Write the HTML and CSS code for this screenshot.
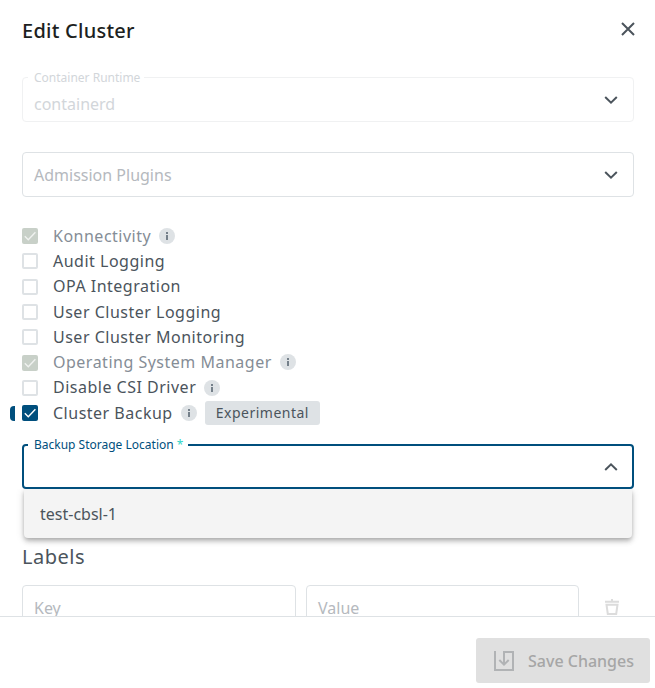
FILE: index.html
```html
<!DOCTYPE html>
<html lang="en">
<head>
<meta charset="utf-8">
<title>Edit Cluster</title>
<link rel="stylesheet" href="styles.css">
</head>
<body>
<div class="dialog">
  <header class="header">
    <h1 class="title">Edit Cluster</h1>
    <svg class="close" width="14" height="14" viewBox="0 0 14 14"><path d="M1 1L13 13M13 1L1 13"/></svg>
  </header>
  <main class="content">
    <div class="field disabled">
      <span class="float-label">Container Runtime</span>
      <span class="value">containerd</span>
      <svg class="chevron" width="14" height="8" viewBox="0 0 14 8"><path d="M1.2 1L7 6.6L12.8 1"/></svg>
    </div>
    <div class="field plugins">
      <span class="placeholder">Admission Plugins</span>
      <svg class="chevron" width="14" height="8" viewBox="0 0 14 8"><path d="M1.2 1L7 6.6L12.8 1"/></svg>
    </div>
    <div class="options">
      <div class="option muted"><span class="box checked"><svg width="16" height="16" viewBox="0 0 16 16"><path d="M2.8 8.2L6.3 11.8L13.4 4.3"/></svg></span><span class="text">Konnectivity</span><span class="info"></span></div>
      <div class="option"><span class="box"></span><span class="text">Audit Logging</span></div>
      <div class="option"><span class="box"></span><span class="text">OPA Integration</span></div>
      <div class="option"><span class="box"></span><span class="text">User Cluster Logging</span></div>
      <div class="option"><span class="box"></span><span class="text">User Cluster Monitoring</span></div>
      <div class="option muted"><span class="box checked"><svg width="16" height="16" viewBox="0 0 16 16"><path d="M2.8 8.2L6.3 11.8L13.4 4.3"/></svg></span><span class="text">Operating System Manager</span><span class="info"></span></div>
      <div class="option"><span class="box"></span><span class="text">Disable CSI Driver</span><span class="info"></span></div>
      <div class="option changed"><span class="box checked"><svg width="16" height="16" viewBox="0 0 16 16"><path d="M2.8 8.2L6.3 11.8L13.4 4.3"/></svg></span><span class="text">Cluster Backup</span><span class="info"></span><span class="badge">Experimental</span></div>
    </div>
    <div class="field focused">
      <span class="float-label">Backup Storage Location <span class="required">*</span></span>
      <svg class="chevron" width="14" height="8" viewBox="0 0 14 8"><path d="M1.2 7L7 1.4L12.8 7"/></svg>
      <div class="menu"><div class="menu-item">test-cbsl-1</div></div>
    </div>
    <h2 class="subtitle">Labels</h2>
    <div class="label-row">
      <div class="field"><span class="placeholder">Key</span></div>
      <div class="field"><span class="placeholder">Value</span></div>
      <svg class="trash" width="16" height="18" viewBox="0 0 16 18"><path d="M1 3.8H15M8 1V4M2.5 6.7H13.5L12.2 16H3.8Z"/></svg>
    </div>
  </main>
  <footer class="footer">
    <button class="save" disabled>
      <svg width="20" height="20" viewBox="0 0 20 20"><path d="M1 0V19H19V1H10V13.5M5.3 9L10 13.7L14.7 9"/></svg>
      <span>Save Changes</span>
    </button>
  </footer>
</div>
</body>
</html>
```

FILE: styles.css
```css
* { box-sizing: border-box; }

body {
  margin: 0;
  background: #fff;
  color: #4b545c;
  font-family: "Noto Sans", sans-serif;
  font-size: 16px;
}

svg {
  flex: none;
  fill: none;
  stroke: currentColor;
  stroke-width: 2;
}

.dialog {
  display: flex;
  flex-direction: column;
  height: 688px;
  overflow: hidden;
}

.header {
  display: flex;
  flex: none;
  align-items: center;
  justify-content: space-between;
  height: 62px;
  padding: 0 20px 0 22px;
}

.title {
  margin: 0;
  color: #1d1f21;
  font-size: 20px;
  font-weight: 500;
  line-height: 28px;
  letter-spacing: .25px;
}

.close { margin-bottom: 4px; }

.content {
  flex: none;
  height: 554px;
  padding: 15px 21px 0 22px;
  overflow: hidden;
}

.field {
  position: relative;
  display: flex;
  align-items: center;
  height: 45px;
  padding: 0 15px 0 11px;
  border: 1px solid #dee2e5;
  border-radius: 4px;
}

.plugins { margin-top: 30px; }

.disabled { border-color: #f0f1f2; }

.disabled .value {
  padding-top: 9px;
  color: #d2d6da;
}

.placeholder { color: #b5b9be; }

.label-row .placeholder { padding-top: 2px; }

.float-label {
  position: absolute;
  top: -8px;
  left: 5px;
  padding: 0 4px 0 6px;
  background: #fff;
  font-size: 12px;
  line-height: 16px;
  white-space: nowrap;
}

.disabled .float-label { color: #d2d6da; }

.chevron { margin-left: auto; }

.options { margin: 26px 0 18.6px; }

.option {
  display: flex;
  align-items: center;
  height: 25.3px;
}

.box {
  flex: none;
  width: 16px;
  height: 16px;
  margin: 1px 15px 0 0;
  border: 2px solid #dee2e5;
  border-radius: 2px;
}

.box.checked {
  border: 0;
  background: #004f7d;
  color: #fff;
}

.box svg { display: block; stroke-width: 1.4; }

.muted .box { background: #c8d0c8; color: #f0f2f0; }

.text { letter-spacing: .5px; }
.muted .text { color: #858d96; }

.info {
  display: flex;
  flex-direction: column;
  align-items: center;
  width: 16px;
  height: 16px;
  margin: .6px 0 0 8px;
  padding-top: 4px;
  border-radius: 50%;
  background: #dee2e5;
}

.info::before,
.info::after {
  content: "";
  width: 2px;
  height: 2px;
  background: #75808a;
}

.info::after { height: 5px; margin-top: 1px; }

.changed { position: relative; }

.changed::before {
  content: "";
  position: absolute;
  left: -12px;
  top: 5.6px;
  width: 5px;
  height: 15px;
  border-radius: 4px 0 0 4px;
  background: #004f7d;
}

.badge {
  height: 24px;
  margin-left: 8px;
  padding: 0 11px;
  border-radius: 3px;
  background: #dee2e5;
  font-size: 14px;
  line-height: 23px;
  letter-spacing: .5px;
}

.focused {
  padding-right: 14px;
  border: 2px solid #004f7d;
}

.focused .chevron { margin-top: 1px; }

.focused .float-label {
  top: -9px;
  left: 4px;
  padding-right: 5px;
  color: #004f7d;
}

.required { color: #30d5c8; }

.menu {
  position: absolute;
  top: 43px;
  left: 0;
  right: 0;
  border-radius: 0 0 4px 4px;
  background: #f4f4f4;
  box-shadow: 0 2px 4px -1px rgba(0,0,0,.2), 0 4px 5px rgba(0,0,0,.14), 0 1px 10px rgba(0,0,0,.12);
  clip-path: inset(0 -14px -16px);
}

.menu-item {
  height: 49px;
  padding-left: 16px;
  line-height: 51px;
}

.subtitle {
  margin: 54px 0 14px;
  font-size: 20px;
  font-weight: 400;
  line-height: 28px;
  letter-spacing: .5px;
}

.label-row {
  display: grid;
  grid-template-columns: 274px 273px 16px;
  column-gap: 10px;
}

.trash {
  margin: 13px 0 0 15px;
  color: #dcdcdc;
}

.footer {
  display: flex;
  flex: none;
  justify-content: flex-end;
  height: 72px;
  padding: 21px 5px 5px;
  border-top: 1px solid #dee2e5;
}

.save {
  display: flex;
  align-items: center;
  gap: 14px;
  width: 174px;
  height: 45px;
  padding: 0 0 0 18px;
  border: 0;
  border-radius: 3px;
  background: #e0e0e0;
  color: #a6a6a6;
  font: 500 16px "Noto Sans", sans-serif;
  white-space: nowrap;
}

.save svg { color: #b1b3b5; }
```
